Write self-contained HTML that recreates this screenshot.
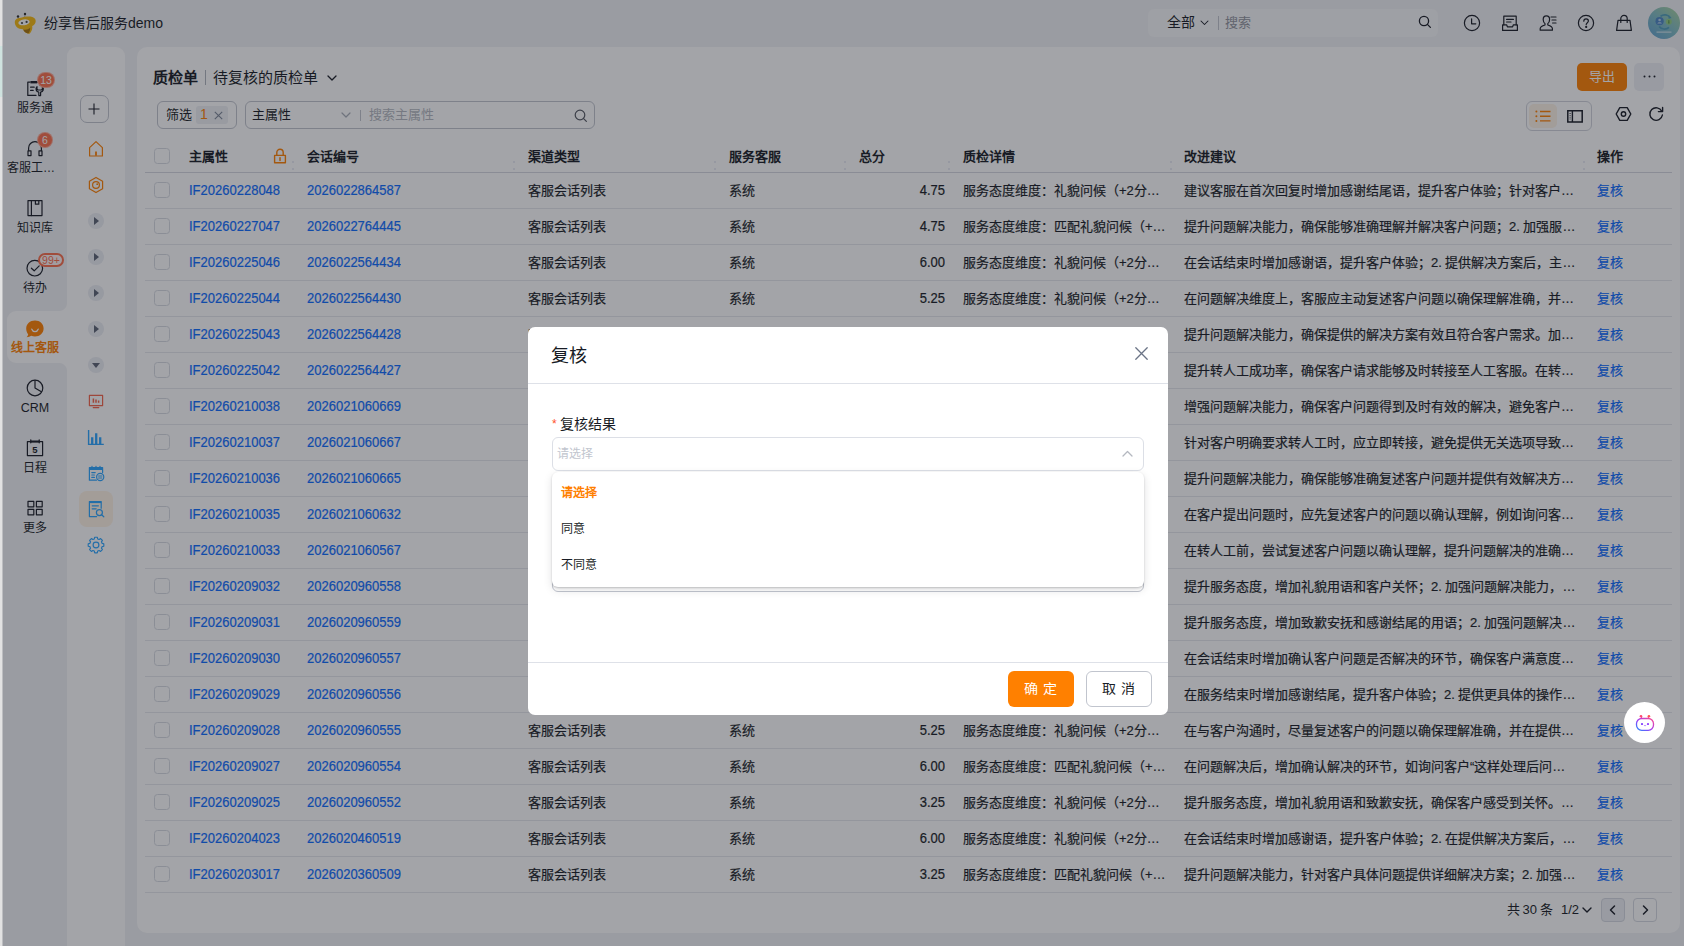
<!DOCTYPE html>
<html lang="zh-CN">
<head>
<meta charset="utf-8">
<title>质检单</title>
<style>
*{box-sizing:border-box;margin:0;padding:0}
html,body{width:1684px;height:946px;overflow:hidden}
body{position:relative;font-family:"Liberation Sans",sans-serif;font-size:13px;color:#181c25;background:#f1f2f5}
.abs{position:absolute}
svg{display:block;overflow:visible}
#app{position:absolute;left:0;top:0;width:1684px;height:946px;background:#f1f2f5}
#strip{position:absolute;left:0;top:0;width:3px;height:946px;background:linear-gradient(90deg,#e2e2e2 0,#e2e2e2 2px,#bdbec1 2px,#bdbec1 3px);z-index:50}
#strip i{position:absolute;left:0;top:46px;width:3px;height:51px;background:linear-gradient(90deg,#cfe3df 0,#cfe3df 2px,#b4bcbe 2px,#b4bcbe 3px)}
/* header */
#logo{left:10px;top:8px;width:30px;height:28px}
#brand{left:44px;top:14px;font-size:14px;line-height:18px;white-space:nowrap;color:#181c25}
#hsearch{left:1148px;top:9px;width:290px;height:28px;border-radius:6px;background:#f7f8fa}
#hsearch .all{position:absolute;left:19px;top:4px;font-size:14px;line-height:18px}
#hsearch .chev{position:absolute;left:52px;top:11px;width:9px;height:6px}
#hsearch .sep{position:absolute;left:70px;top:7px;width:1px;height:14px;background:#c1c5ce}
#hsearch .ph{position:absolute;left:77px;top:5px;font-size:13px;line-height:17px;color:#91959e}
#hsearch .mag{position:absolute;left:270px;top:6px;width:14px;height:14px}
.hicon{position:absolute;top:14px;width:18px;height:18px;fill:none;stroke:#181c25;stroke-width:1.2;stroke-linecap:round;stroke-linejoin:round}
#avatar{left:1648px;top:7px;width:32px;height:32px;border-radius:50%;background:linear-gradient(40deg,#5f9fd0 0%,#7fbcc4 50%,#acd59c 100%);overflow:hidden}
/* sidebar */
#side2{left:67px;top:47px;width:58px;height:899px;background:#fff;border-radius:9px 9px 0 0}
#activetab{left:7px;top:311px;width:62px;height:52px;background:#fff;border-radius:9px 0 0 9px}
.nav{position:absolute;left:3px;width:64px;text-align:center;font-size:12px;line-height:16px;color:#181c25;white-space:nowrap}
.nicon{position:absolute;width:20px;height:20px;fill:none;stroke:#181c25;stroke-width:1.2;stroke-linecap:round;stroke-linejoin:round}
.badge{position:absolute;background:#fa6e4c;box-shadow:0 0 0 1px rgba(255,255,255,.55);color:#fff;font-size:10px;line-height:14px;height:14px;min-width:14px;border-radius:7px;text-align:center;padding:0 3px}
.s2i{position:absolute;left:86px;width:20px;height:20px;fill:none;stroke-width:1.2;stroke-linecap:round;stroke-linejoin:round}
.play{position:absolute;left:88px;width:16px;height:16px;border-radius:50%;background:#eceef3}
.play i{position:absolute;left:6px;top:4px;width:0;height:0;border-left:5px solid #5d6476;border-top:4px solid transparent;border-bottom:4px solid transparent}
.play.down i{left:4px;top:6px;border-left:4px solid transparent;border-right:4px solid transparent;border-top:5px solid #5d6476;border-bottom:0}
/* main */
#main{left:137px;top:47px;width:1543px;height:886px;background:#fff;border-radius:10px}
#overlay{position:absolute;left:3px;top:0;width:1681px;height:946px;background:rgba(24,28,37,.4);z-index:40}
/* main content */
#title{left:153px;top:69px;font-size:15px;line-height:18px;font-weight:bold;white-space:nowrap}
#title2{left:213px;top:69px;font-size:15px;line-height:18px;white-space:nowrap}
.chip{left:157px;top:101px;width:80px;height:28px;border:1px solid #c1c5ce;border-radius:6px}
.chip span{position:absolute;left:8px;top:5px;line-height:16px}
.chip .tag{position:absolute;left:38px;top:4px;width:32px;height:18px;border-radius:3px;background:#eef0f4}
.chip .tag b{position:absolute;left:4px;top:0;font-weight:normal;font-size:14px;color:#ff8000;line-height:17px}
#tsearch{left:245px;top:101px;width:350px;height:28px;border:1px solid #c1c5ce;border-radius:6px}
#tsearch .f{position:absolute;left:6px;top:5px;line-height:16px}
#tsearch .sep{position:absolute;left:114px;top:8px;width:1px;height:11px;background:#c1c5ce}
#tsearch .ph{position:absolute;left:123px;top:5px;line-height:16px;color:#b4b8c0}
#export{left:1577px;top:63px;width:50px;height:28px;border-radius:5px;background:#ff8000;color:#fff;text-align:center;line-height:27px;font-size:13px}
#more{left:1634px;top:63px;width:30px;height:28px;border-radius:5px;background:#eff1f6}
#viewgrp{left:1526px;top:101px;width:66px;height:30px;border:1px solid #d0d3db;border-radius:6px}
#viewgrp .on{position:absolute;left:2px;top:2px;width:28px;height:24px;border-radius:5px;background:#fdf3e6}
.th{position:absolute;top:149px;font-weight:bold;line-height:16px;white-space:nowrap}
.cb{position:absolute;left:154px;width:16px;height:16px;border:1px solid #d8dbe2;border-radius:3.500px;background:#fff}
.hl{position:absolute;left:145px;width:1527px;height:1px;background:#e6e8ed}
.r{position:absolute;left:0;width:1684px;height:36px}
.r span{position:absolute;top:11px;line-height:16px;white-space:nowrap;overflow:hidden;-webkit-text-stroke:.2px currentColor}
.r .a{left:189px;color:#0c6cff;transform:scaleY(1.1);transform-origin:0 74%}
.r .b{left:307px;color:#0c6cff;transform:scaleY(1.1);transform-origin:0 74%}
.r .c{left:528px}
.r .d{left:729px}
.r .e{left:880px;width:65px;text-align:right;transform:scaleY(1.1);transform-origin:0 74%}
.r .f{left:963px;width:206px}
.r .g{left:1184px;width:400px}
.r .h{left:1597px;color:#0c6cff}
#pager{left:1507px;top:902px;line-height:16px;white-space:nowrap;font-size:13px;word-spacing:-1px}
.pbtn{position:absolute;top:898px;width:24px;height:24px;border:1px solid #d6d9e1;border-radius:4px}
#bot{position:absolute;left:1624px;top:702px;width:41px;height:41px;border-radius:50%;background:#fff;z-index:45}
.dot{position:absolute;width:2px;height:2px;background:#e3e6f0;border-radius:1px}
/* modal */
#modal{position:absolute;left:528px;top:327px;width:640px;height:388px;background:#fff;border-radius:7px;z-index:60}
#modal .ttl{position:absolute;left:23px;top:17px;font-size:18px;line-height:24px;color:#181c25;white-space:nowrap}
#modal .hsep{position:absolute;left:0;top:56px;width:640px;height:1px;background:#dee1e8}
#modal .fsep{position:absolute;left:0;top:335px;width:640px;height:1px;background:#dee1e8}
#modal .lbl{position:absolute;left:24px;top:88px;font-size:14px;line-height:18px;white-space:nowrap;color:#181c25}
#modal .lbl b{font-weight:normal;color:#ff522a;font-size:12px;margin-right:3px;position:relative;top:-1px}
#modal .sel{position:absolute;left:24px;top:110px;width:592px;height:34px;border:1px solid #dcdfe6;border-radius:6px;background:#fff}
#modal .sel span{position:absolute;left:4px;top:8px;font-size:12px;line-height:16px;color:#c1c5ce}
#modal .ta{position:absolute;left:24px;top:200px;width:592px;height:65px;border:1px solid #c1c5ce;border-radius:6px;background:#fff}
#modal .dd{position:absolute;left:24px;top:145px;width:592px;height:115px;border-radius:6px;background:#fff;box-shadow:0 1px 2px rgba(24,28,37,.22),0 3px 10px rgba(24,28,37,.12)}
#modal .dd div{position:absolute;left:9px;font-size:12px;line-height:16px;white-space:nowrap;color:#181c25}
#modal .btn{position:absolute;top:344px;width:66px;height:36px;border-radius:6px;font-size:13px;line-height:34px;text-align:center;white-space:nowrap}
#modal .btn span{display:inline-block;width:13px;text-align:center;transform:scaleX(1.08)}
#modal .btn span+span{margin-left:5.5px}
#modal .ok{left:480px;background:#ff8000;color:#fff;line-height:36px}
#modal .no{left:558px;border:1px solid #c1c5ce;color:#181c25;background:#fff}
</style>
</head>
<body>
<div id="app">
  <div id="side2" class="abs"></div>
  <div id="activetab" class="abs"></div>
  <div id="main" class="abs"></div>
  <!-- header -->
  <svg id="logo" class="abs" viewBox="10 8 30 28">
    <circle cx="18" cy="16.500" r="1.200" fill="#2e2e2e"/><circle cx="25" cy="14" r="1.200" fill="#2e2e2e"/>
    <path d="M18.300 17.200l.9 1.600M25 15l-.3 2" stroke="#6b6b6b" stroke-width=".5" fill="none"/>
    <path d="M14.800 22.500C14.600 19 18 17.600 22 17.400c3.500-.9 10.500-2 13 1.400 1.600 2.600.3 6-2.800 7.200.6 2.800-.6 5.600-2.600 7.800-2.800-.2-5.600-1.800-6.600-4.600-4.200.2-8-2.400-8.200-6.700z" fill="#f5b90f"/>
    <path d="M23.200 29.400c2 .8 5.200.2 7-1.600.2 2.200-.6 4.200-1.800 5.600-2.400-.2-4.600-1.800-5.200-4z" fill="#a9750c"/>
    <ellipse cx="24" cy="22.300" rx="5.700" ry="2.900" transform="rotate(-9 24 22.300)" fill="#fff"/>
    <circle cx="22" cy="23" r="1.100" fill="#444"/><circle cx="26.600" cy="21.900" r="1.100" fill="#444"/>
  </svg>
  <div id="brand" class="abs">纷享售后服务demo</div>
  <div id="hsearch" class="abs">
    <span class="all">全部</span>
    <svg class="chev" viewBox="0 0 9 6"><path d="M1 1l3.500 3.500L8 1" fill="none" stroke="#181c25" stroke-width="1.050" stroke-linecap="round" stroke-linejoin="round"/></svg>
    <i class="sep"></i><span class="ph">搜索</span>
    <svg class="mag" viewBox="0 0 14 14"><circle cx="6" cy="6" r="4.600" fill="none" stroke="#181c25" stroke-width="1.300"/><path d="M9.400 9.400l3 3" stroke="#181c25" stroke-width="1.300" stroke-linecap="round"/></svg>
  </div>
  <svg class="hicon" style="left:1463px" viewBox="0 0 18 18"><circle cx="9" cy="9" r="7.600"/><path d="M8.600 4.800v5h4.200"/></svg>
  <svg class="hicon" style="left:1501px" viewBox="0 0 18 18"><path d="M2.800 10.800V2.200h12.400v8.600"/><path d="M1.600 10.800h4l.8 2h5.200l.8-2h4v5.600H1.600z"/><path d="M5.600 5.400h6.800M5.600 8h4.400"/></svg>
  <svg class="hicon" style="left:1539px" viewBox="0 0 18 18"><path d="M7.400 1.800c2 0 3.200 1.600 3.200 3.600 0 1.800-.8 3.400-1.800 4.200v1.400c2.600.8 4.600 2 4.600 3.600v1.600H1.200v-1.600c0-1.600 2-2.800 4.800-3.600V9.600C5 8.800 4.200 7.200 4.200 5.400c0-2 1.200-3.600 3.200-3.600z"/><path d="M12 3h5M13 6h4M13.600 9h3.400"/></svg>
  <svg class="hicon" style="left:1577px" viewBox="0 0 18 18"><circle cx="9" cy="9" r="7.600"/><path d="M6.800 7.200c0-1.400 1-2.300 2.300-2.300s2.300.9 2.300 2.100c0 1.700-2.200 1.700-2.200 3.600"/><circle cx="9.200" cy="12.900" r=".5" fill="#181c25"/></svg>
  <svg class="hicon" style="left:1615px" viewBox="0 0 18 18"><path d="M3 6.400h12l1.400 10H1.600z"/><path d="M5.800 8.400V4.600c0-1.800 1.400-3.200 3.200-3.200s3.200 1.400 3.200 3.200v3.800"/></svg>
  <div id="avatar" class="abs">
    <svg viewBox="0 0 32 32" width="32" height="32" opacity=".9"><path d="M12.500 9.400c3-2.600 8-1.800 9.800 1.600M21 20.400c-3 2.600-7.600 2-9.800-1" fill="none" stroke="#4a9ab8" stroke-width="1.700"/><path d="M21 8.400l2.600 2.600-3.200.8z" fill="#4a9ab8"/><circle cx="11.600" cy="14.200" r="4.100" fill="#4680c4"/><circle cx="11.600" cy="13" r="1.300" fill="#b9d4ee"/><path d="M9.300 16.600c.5-1.800 4.100-1.800 4.600 0" fill="#b9d4ee"/><circle cx="20.800" cy="14.800" r="3" fill="#93cf7c"/><path d="M20.400 13h.9l.4 3.400h-1.800z" fill="#5f9a48"/><rect x="8.500" y="24.400" width="15" height="1.500" fill="#d9eaf0" opacity=".75"/></svg>
  </div>
  <!-- sidebar col 1 -->
  <div class="abs" style="left:59px;top:303px;width:8px;height:8px;background:radial-gradient(circle at 0 0,rgba(255,255,255,0) 7.500px,#fff 8.500px)"></div>
  <div class="abs" style="left:59px;top:363px;width:8px;height:8px;background:radial-gradient(circle at 0 100%,rgba(255,255,255,0) 7.500px,#fff 8.500px)"></div>

  <svg class="nicon" style="left:25px;top:78px" viewBox="0 0 20 20"><path d="M11 17.400H2.800V4.200h2M12.600 4.200h2.200v3"/><path d="M5.400 3h6.800v2.400H5.400z" fill="#181c25" stroke="none"/><path d="M5.600 9.200h3.600M5.600 12.400h2.600"/><path d="M12 8.600a3.300 3.300 0 0 0 1.800 5.600v3.400h1.800v-3.400a3.300 3.300 0 0 0 1.800-5.600v2.600l-1 .8h-3.400l-1-.8z"/></svg>
  <div class="nav" style="top:100px">服务通</div>
  <div class="badge" style="left:37px;top:72px;width:18px;height:16px;line-height:14px;border-radius:8px;padding:0;font-size:10.5px;border:1px solid rgba(255,255,255,.4);box-shadow:none">13</div>

  <svg class="nicon" style="left:25px;top:138px" viewBox="0 0 20 20"><path d="M3.600 12.600V10a6.400 6.400 0 0 1 12.800 0v2.600"/><path d="M3 12.800h3v4.800H3zM14 12.800h3v4.800h-3z"/></svg>
  <div class="nav" style="top:160px;left:7px;width:auto;text-align:left">客服工…</div>
  <div class="badge" style="left:37px;top:132px;width:16px;height:16px;line-height:14px;border-radius:8px;padding:0;font-size:10.5px;border:1px solid rgba(255,255,255,.4);box-shadow:none">6</div>

  <svg class="nicon" style="left:25px;top:198px" viewBox="0 0 20 20"><path d="M3 2.600h14v15H3z"/><path d="M6.400 2.600v15"/><path d="M10.400 2.800v3.400h3.400V2.800"/></svg>
  <div class="nav" style="top:220px">知识库</div>

  <svg class="nicon" style="left:25px;top:258px" viewBox="0 0 20 20"><circle cx="9.800" cy="10.200" r="7.800"/><path d="M6.400 10.200l2.800 2.600 5-5"/></svg>
  <div class="nav" style="top:280px">待办</div>
  <div class="abs" style="left:38px;top:253px;width:26px;height:14px;border:2px solid #fa6e4c;border-radius:7px;background:#fdf3f2;color:#fa6e4c;font-size:10.500px;line-height:10px;text-align:center">99+</div>

  <svg class="abs" style="left:25px;top:320px;width:20px;height:18px" viewBox="0 0 20 18"><path d="M10 .6c5 0 8.600 3.400 8.600 7.800 0 4.600-3.800 8-8.600 8-1.400 0-2.600-.2-3.800-.6-1.200.8-2.800 1.400-4.600 1.400.8-.8 1.400-1.800 1.600-3C2 12.800 1.200 10.800 1.200 8.400 1.200 4 5 .6 10 .6z" fill="#ff8000"/><path d="M6.800 9.200c.6 1.600 1.800 2.400 3.200 2.400s2.600-.8 3.200-2.400" fill="none" stroke="#fff" stroke-width="1.300" stroke-linecap="round"/></svg>
  <div class="nav" style="top:340px;font-weight:bold;color:#ff8000">线上客服</div>

  <svg class="nicon" style="left:25px;top:378px" viewBox="0 0 20 20"><circle cx="10" cy="10" r="7.800"/><path d="M10 2.400V10l6.400 3.800"/></svg>
  <div class="nav" style="top:400px;font-size:12.500px">CRM</div>

  <svg class="nicon" style="left:25px;top:438px" viewBox="0 0 20 20"><path d="M2.400 3.600h15.200v14H2.400z"/><path d="M5.800 1.800v3M14.200 1.800v3" /><path d="M5.800 3.600h8.400" stroke-width="2"/><text x="10" y="14.600" font-size="9.500" font-weight="bold" text-anchor="middle" fill="#181c25" stroke="none" font-family="Liberation Sans, sans-serif">5</text></svg>
  <div class="nav" style="top:460px">日程</div>

  <svg class="nicon" style="left:25px;top:498px" viewBox="0 0 20 20"><path d="M3 3.400h5.800v5.400H3zM11.400 3.400h5.800v5.400h-5.800zM3 11.400h5.800v5.400H3zM11.400 11.400h5.800v5.400h-5.800z"/></svg>
  <div class="nav" style="top:520px">更多</div>
  <!-- sidebar col 2 -->
  <div class="abs" style="left:80px;top:95px;width:29px;height:28px;border:1px solid #c1c5ce;border-radius:7px"></div>
  <svg class="abs" style="left:88px;top:103px;width:12px;height:12px" viewBox="0 0 12 12"><path d="M6 .5v11M.5 6h11" stroke="#181c25" stroke-width="1.100" fill="none"/></svg>

  <svg class="s2i" style="top:139px;stroke:#ff8000" viewBox="0 0 20 20"><path d="M3.600 8.600L10 2.600l6.400 6v8.400H3.600z"/><path d="M10 12.600v4.200" stroke-width="1.800" stroke-linecap="butt"/></svg>
  <svg class="s2i" style="top:175px;stroke:#ff8000" viewBox="0 0 20 20"><path d="M10 2.400l6.600 3.800v7.600L10 17.600l-6.600-3.800V6.200z"/><circle cx="10" cy="10" r="3.400"/><circle cx="11.200" cy="9.200" r=".9" fill="#ff8000" stroke="none"/></svg>

  <div class="play" style="top:213px"><i></i></div>
  <div class="play" style="top:249px"><i></i></div>
  <div class="play" style="top:285px"><i></i></div>
  <div class="play" style="top:321px"><i></i></div>
  <div class="play down" style="top:357px"><i></i></div>

  <svg class="s2i" style="top:391px;stroke:#f5654a" viewBox="0 0 20 20"><path d="M3.400 4.400h13.200v10.200H3.400z"/><path d="M7.200 16.600h5.600"/><path d="M7.400 7.400v4.400M10 8.400v3.400M12.600 9.400v2.400" stroke-width="1.500" stroke-linecap="butt"/></svg>
  <svg class="s2i" style="top:427px;stroke:#2ba5ff" viewBox="0 0 20 20"><path d="M2.600 3v14.400h15.200" stroke-linecap="butt" stroke-linejoin="miter" stroke-width="1.400"/><path d="M6.200 10.200v7M10.200 6.200v11M14.200 10.200v7" stroke-width="2.300" stroke-linecap="butt"/></svg>
  <svg class="s2i" style="top:463px;stroke:#2ba5ff" viewBox="0 0 20 20"><path d="M10.400 17.200H3.400V4.600h13.200v5"/><path d="M3.400 6h13.200" stroke-width="2" stroke-linecap="butt"/><path d="M6 3.400v1.600M10 3.400v1.600M14 3.400v1.600"/><path d="M5.800 9.600h3.400M5.800 12h2.600M5.800 14.400h2.600"/><circle cx="14.200" cy="14" r="3.600"/><path d="M12.600 13h3.200M12.600 15h3.200"/></svg>

  <div class="abs" style="left:79px;top:491px;width:34px;height:36px;border-radius:8px;background:#fff3e4"></div>
  <svg class="s2i" style="top:499px;stroke:#2ba5ff" viewBox="0 0 20 20"><path d="M10.600 17.600H3.400V2.600h11.800v6.600"/><path d="M3.400 3.200h11.800" stroke-width="1.800" stroke-linecap="butt"/><path d="M6.200 6.800h6.200M6.200 9.800h4"/><circle cx="13.400" cy="13.600" r="3"/><path d="M15.600 15.800l2.200 2"/></svg>
  <svg class="s2i" style="top:535px;stroke:#2ba5ff;stroke-width:1.15" viewBox="0 0 20 20"><circle cx="10" cy="10" r="2.900"/><path d="M8.32 3.93 L8.74 2.20 L11.26 2.20 L11.68 3.93 L13.11 4.52 L14.62 3.60 L16.40 5.38 L15.48 6.89 L16.07 8.32 L17.80 8.74 L17.80 11.26 L16.07 11.68 L15.48 13.11 L16.40 14.62 L14.62 16.40 L13.11 15.48 L11.68 16.07 L11.26 17.80 L8.74 17.80 L8.32 16.07 L6.89 15.48 L5.38 16.40 L3.60 14.62 L4.52 13.11 L3.93 11.68 L2.20 11.26 L2.20 8.74 L3.93 8.32 L4.52 6.89 L3.60 5.38 L5.38 3.60 L6.89 4.52z"/></svg>
  <!-- main toolbar -->
  <div id="title" class="abs">质检单</div>
  <i class="abs" style="left:205px;top:70px;width:1px;height:15px;background:#b0b4bd"></i>
  <div id="title2" class="abs">待复核的质检单</div>
  <svg class="abs" style="left:327px;top:75px;width:10px;height:7px" viewBox="0 0 10 7"><path d="M1 1l4 4 4-4" fill="none" stroke="#181c25" stroke-width="1.300" stroke-linecap="round" stroke-linejoin="round"/></svg>

  <div class="chip abs"><span>筛选</span><div class="tag"><b>1</b>
    <svg style="position:absolute;left:18px;top:5px;width:9px;height:9px" viewBox="0 0 9 9"><path d="M.8 .8l7.400 7.400M8.200 .8L.8 8.200" stroke="#7b8494" stroke-width="1.100" fill="none"/></svg></div></div>
  <div id="tsearch" class="abs"><span class="f">主属性</span>
    <svg style="position:absolute;left:95px;top:10px;width:10px;height:7px" viewBox="0 0 10 7"><path d="M1 1l4 4 4-4" fill="none" stroke="#a9aeb8" stroke-width="1.200" stroke-linecap="round" stroke-linejoin="round"/></svg>
    <i class="sep"></i><span class="ph">搜索主属性</span>
    <svg style="position:absolute;left:328px;top:7px;width:14px;height:14px" viewBox="0 0 14 14"><circle cx="6" cy="6" r="4.800" fill="none" stroke="#545861" stroke-width="1.200"/><path d="M9.600 9.600l2.800 2.800" stroke="#545861" stroke-width="1.200" stroke-linecap="round"/></svg>
  </div>

  <div id="export" class="abs">导出</div>
  <div id="more" class="abs"><svg style="position:absolute;left:9px;top:12px;width:13px;height:3px" viewBox="0 0 13 3"><circle cx="1.500" cy="1.500" r="1" fill="#181c25"/><circle cx="6.500" cy="1.500" r="1" fill="#181c25"/><circle cx="11.500" cy="1.500" r="1" fill="#181c25"/></svg></div>
  <div id="viewgrp" class="abs"><div class="on"></div>
    <svg style="position:absolute;left:8px;top:8px;width:16px;height:13px" viewBox="0 0 16 13"><path d="M5 1.500h10.500M5 6.200h10.500M5 10.900h10.500" stroke="#ff8000" stroke-width="1.400" fill="none"/><circle cx="1.400" cy="1.500" r="1" fill="#ff8000"/><circle cx="1.400" cy="6.200" r="1" fill="#ff8000"/><circle cx="1.400" cy="10.900" r="1" fill="#ff8000"/></svg>
    <svg style="position:absolute;left:40px;top:8px;width:16px;height:13px" viewBox="0 0 16 13"><path d="M.8 .8h14.400v11.200H.8z" fill="none" stroke="#181c25" stroke-width="1.500"/><path d="M5.400 .8v11.200" stroke="#181c25" stroke-width="1.400"/><path d="M3.100 3v7" stroke="#181c25" stroke-width="1" stroke-dasharray="1 1.200"/></svg>
  </div>
  <svg class="abs" style="left:1615px;top:106px;width:17px;height:16px" viewBox="0 0 17 16"><path d="M1.200 8l3.600-6.400h7.400L15.800 8l-3.600 6.400H4.800z" fill="none" stroke="#181c25" stroke-width="1.400" stroke-linejoin="round"/><circle cx="8.500" cy="8" r="2.200" fill="none" stroke="#181c25" stroke-width="1.400"/></svg>
  <svg class="abs" style="left:1648px;top:106px;width:16px;height:16px" viewBox="0 0 16 16"><path d="M13.800 5.200A6.300 6.300 0 1 0 14.400 9" fill="none" stroke="#181c25" stroke-width="1.400" stroke-linecap="round"/><path d="M14.600 1.400v4.200h-4.200" fill="none" stroke="#181c25" stroke-width="1.400" stroke-linecap="round" stroke-linejoin="round"/></svg>

  <!-- table header -->
  <i class="cb" style="top:148px"></i>
  <div class="th" style="left:189px">主属性</div>
  <svg class="abs" style="left:273px;top:148px;width:14px;height:16px" viewBox="0 0 14 16"><path d="M1.600 7.400h10.800v7.400H1.600z" fill="none" stroke="#ff8000" stroke-width="1.400" stroke-linejoin="round"/><path d="M3.800 7.200V4.400a3.200 3.200 0 0 1 6.400 0v2.800" fill="none" stroke="#ff8000" stroke-width="1.400"/><path d="M7 9.800v2.600" stroke="#ff8000" stroke-width="1.500" stroke-linecap="round"/></svg>
  <div class="th" style="left:307px">会话编号</div>
  <div class="th" style="left:528px">渠道类型</div>
  <div class="th" style="left:729px">服务客服</div>
  <div class="th" style="left:859px">总分</div>
  <div class="th" style="left:963px">质检详情</div>
  <div class="th" style="left:1184px">改进建议</div>
  <div class="th" style="left:1597px">操作</div>
  <i class="dot" style="left:292px;top:161px"></i><i class="dot" style="left:292px;top:168px"></i><i class="dot" style="left:513px;top:161px"></i><i class="dot" style="left:513px;top:168px"></i><i class="dot" style="left:714px;top:161px"></i><i class="dot" style="left:714px;top:168px"></i><i class="dot" style="left:844px;top:161px"></i><i class="dot" style="left:844px;top:168px"></i><i class="dot" style="left:948px;top:161px"></i><i class="dot" style="left:948px;top:168px"></i><i class="dot" style="left:1170px;top:161px"></i><i class="dot" style="left:1170px;top:168px"></i><i class="dot" style="left:1583px;top:161px"></i><i class="dot" style="left:1583px;top:168px"></i>
  <i class="hl" style="top:172px;background:#d5d8e0"></i>
  <!-- table rows -->
  <div class="r" style="top:172px"><i class="cb" style="top:10px"></i><span class="a">IF20260228048</span><span class="b">2026022864587</span><span class="c">客服会话列表</span><span class="d">系统</span><span class="e">4.75</span><span class="f">服务态度维度：礼貌问候（+2分…</span><span class="g">建议客服在首次回复时增加感谢结尾语，提升客户体验；针对客户…</span><span class="h">复核</span></div>
  <i class="hl" style="top:208px"></i>
  <div class="r" style="top:208px"><i class="cb" style="top:10px"></i><span class="a">IF20260227047</span><span class="b">2026022764445</span><span class="c">客服会话列表</span><span class="d">系统</span><span class="e">4.75</span><span class="f">服务态度维度：匹配礼貌问候（+…</span><span class="g">提升问题解决能力，确保能够准确理解并解决客户问题；2. 加强服…</span><span class="h">复核</span></div>
  <i class="hl" style="top:244px"></i>
  <div class="r" style="top:244px"><i class="cb" style="top:10px"></i><span class="a">IF20260225046</span><span class="b">2026022564434</span><span class="c">客服会话列表</span><span class="d">系统</span><span class="e">6.00</span><span class="f">服务态度维度：礼貌问候（+2分…</span><span class="g">在会话结束时增加感谢语，提升客户体验；2. 提供解决方案后，主…</span><span class="h">复核</span></div>
  <i class="hl" style="top:280px"></i>
  <div class="r" style="top:280px"><i class="cb" style="top:10px"></i><span class="a">IF20260225044</span><span class="b">2026022564430</span><span class="c">客服会话列表</span><span class="d">系统</span><span class="e">5.25</span><span class="f">服务态度维度：礼貌问候（+2分…</span><span class="g">在问题解决维度上，客服应主动复述客户问题以确保理解准确，并…</span><span class="h">复核</span></div>
  <i class="hl" style="top:316px"></i>
  <div class="r" style="top:316px"><i class="cb" style="top:10px"></i><span class="a">IF20260225043</span><span class="b">2026022564428</span><span class="c">客服会话列表</span><span class="d">系统</span><span class="e">4.50</span><span class="f">服务态度维度：礼貌问候（+2分…</span><span class="g">提升问题解决能力，确保提供的解决方案有效且符合客户需求。加…</span><span class="h">复核</span></div>
  <i class="hl" style="top:352px"></i>
  <div class="r" style="top:352px"><i class="cb" style="top:10px"></i><span class="a">IF20260225042</span><span class="b">2026022564427</span><span class="c">客服会话列表</span><span class="d">系统</span><span class="e">3.75</span><span class="f">服务态度维度：礼貌问候（+2分…</span><span class="g">提升转人工成功率，确保客户请求能够及时转接至人工客服。在转…</span><span class="h">复核</span></div>
  <i class="hl" style="top:388px"></i>
  <div class="r" style="top:388px"><i class="cb" style="top:10px"></i><span class="a">IF20260210038</span><span class="b">2026021060669</span><span class="c">客服会话列表</span><span class="d">系统</span><span class="e">4.25</span><span class="f">服务态度维度：礼貌问候（+2分…</span><span class="g">增强问题解决能力，确保客户问题得到及时有效的解决，避免客户…</span><span class="h">复核</span></div>
  <i class="hl" style="top:424px"></i>
  <div class="r" style="top:424px"><i class="cb" style="top:10px"></i><span class="a">IF20260210037</span><span class="b">2026021060667</span><span class="c">客服会话列表</span><span class="d">系统</span><span class="e">3.50</span><span class="f">服务态度维度：匹配礼貌问候（+…</span><span class="g">针对客户明确要求转人工时，应立即转接，避免提供无关选项导致…</span><span class="h">复核</span></div>
  <i class="hl" style="top:460px"></i>
  <div class="r" style="top:460px"><i class="cb" style="top:10px"></i><span class="a">IF20260210036</span><span class="b">2026021060665</span><span class="c">客服会话列表</span><span class="d">系统</span><span class="e">4.75</span><span class="f">服务态度维度：礼貌问候（+2分…</span><span class="g">提升问题解决能力，确保能够准确复述客户问题并提供有效解决方…</span><span class="h">复核</span></div>
  <i class="hl" style="top:496px"></i>
  <div class="r" style="top:496px"><i class="cb" style="top:10px"></i><span class="a">IF20260210035</span><span class="b">2026021060632</span><span class="c">客服会话列表</span><span class="d">系统</span><span class="e">5.00</span><span class="f">服务态度维度：礼貌问候（+2分…</span><span class="g">在客户提出问题时，应先复述客户的问题以确认理解，例如询问客…</span><span class="h">复核</span></div>
  <i class="hl" style="top:532px"></i>
  <div class="r" style="top:532px"><i class="cb" style="top:10px"></i><span class="a">IF20260210033</span><span class="b">2026021060567</span><span class="c">客服会话列表</span><span class="d">系统</span><span class="e">4.25</span><span class="f">服务态度维度：礼貌问候（+2分…</span><span class="g">在转人工前，尝试复述客户问题以确认理解，提升问题解决的准确…</span><span class="h">复核</span></div>
  <i class="hl" style="top:568px"></i>
  <div class="r" style="top:568px"><i class="cb" style="top:10px"></i><span class="a">IF20260209032</span><span class="b">2026020960558</span><span class="c">客服会话列表</span><span class="d">系统</span><span class="e">3.25</span><span class="f">服务态度维度：匹配礼貌问候（+…</span><span class="g">提升服务态度，增加礼貌用语和客户关怀；2. 加强问题解决能力，…</span><span class="h">复核</span></div>
  <i class="hl" style="top:604px"></i>
  <div class="r" style="top:604px"><i class="cb" style="top:10px"></i><span class="a">IF20260209031</span><span class="b">2026020960559</span><span class="c">客服会话列表</span><span class="d">系统</span><span class="e">3.50</span><span class="f">服务态度维度：礼貌问候（+2分…</span><span class="g">提升服务态度，增加致歉安抚和感谢结尾的用语；2. 加强问题解决…</span><span class="h">复核</span></div>
  <i class="hl" style="top:640px"></i>
  <div class="r" style="top:640px"><i class="cb" style="top:10px"></i><span class="a">IF20260209030</span><span class="b">2026020960557</span><span class="c">客服会话列表</span><span class="d">系统</span><span class="e">5.25</span><span class="f">服务态度维度：礼貌问候（+2分…</span><span class="g">在会话结束时增加确认客户问题是否解决的环节，确保客户满意度…</span><span class="h">复核</span></div>
  <i class="hl" style="top:676px"></i>
  <div class="r" style="top:676px"><i class="cb" style="top:10px"></i><span class="a">IF20260209029</span><span class="b">2026020960556</span><span class="c">客服会话列表</span><span class="d">系统</span><span class="e">5.75</span><span class="f">服务态度维度：礼貌问候（+2分…</span><span class="g">在服务结束时增加感谢结尾，提升客户体验；2. 提供更具体的操作…</span><span class="h">复核</span></div>
  <i class="hl" style="top:712px"></i>
  <div class="r" style="top:712px"><i class="cb" style="top:10px"></i><span class="a">IF20260209028</span><span class="b">2026020960555</span><span class="c">客服会话列表</span><span class="d">系统</span><span class="e">5.25</span><span class="f">服务态度维度：礼貌问候（+2分…</span><span class="g">在与客户沟通时，尽量复述客户的问题以确保理解准确，并在提供…</span><span class="h">复核</span></div>
  <i class="hl" style="top:748px"></i>
  <div class="r" style="top:748px"><i class="cb" style="top:10px"></i><span class="a">IF20260209027</span><span class="b">2026020960554</span><span class="c">客服会话列表</span><span class="d">系统</span><span class="e">6.00</span><span class="f">服务态度维度：匹配礼貌问候（+…</span><span class="g">在问题解决后，增加确认解决的环节，如询问客户“这样处理后问…</span><span class="h">复核</span></div>
  <i class="hl" style="top:784px"></i>
  <div class="r" style="top:784px"><i class="cb" style="top:10px"></i><span class="a">IF20260209025</span><span class="b">2026020960552</span><span class="c">客服会话列表</span><span class="d">系统</span><span class="e">3.25</span><span class="f">服务态度维度：礼貌问候（+2分…</span><span class="g">提升服务态度，增加礼貌用语和致歉安抚，确保客户感受到关怀。…</span><span class="h">复核</span></div>
  <i class="hl" style="top:820px"></i>
  <div class="r" style="top:820px"><i class="cb" style="top:10px"></i><span class="a">IF20260204023</span><span class="b">2026020460519</span><span class="c">客服会话列表</span><span class="d">系统</span><span class="e">6.00</span><span class="f">服务态度维度：礼貌问候（+2分…</span><span class="g">在会话结束时增加感谢语，提升客户体验；2. 在提供解决方案后，…</span><span class="h">复核</span></div>
  <i class="hl" style="top:856px"></i>
  <div class="r" style="top:856px"><i class="cb" style="top:10px"></i><span class="a">IF20260203017</span><span class="b">2026020360509</span><span class="c">客服会话列表</span><span class="d">系统</span><span class="e">3.25</span><span class="f">服务态度维度：匹配礼貌问候（+…</span><span class="g">提升问题解决能力，针对客户具体问题提供详细解决方案；2. 加强…</span><span class="h">复核</span></div>
  <i class="hl" style="top:892px"></i>
  <!-- pagination -->
  <div id="pager" class="abs">共 30 条</div>
  <div class="abs" style="left:1561px;top:902px;line-height:16px;font-size:13px">1/2</div>
  <svg class="abs" style="left:1582px;top:907px;width:10px;height:7px" viewBox="0 0 10 7"><path d="M1 1l4 4 4-4" fill="none" stroke="#181c25" stroke-width="1.400" stroke-linecap="round" stroke-linejoin="round"/></svg>
  <div class="pbtn" style="left:1601px;background:#eff1f6"><svg style="position:absolute;left:7px;top:6px;width:7px;height:10px" viewBox="0 0 7 10"><path d="M5.500 1L1.500 5l4 4" fill="none" stroke="#181c25" stroke-width="1.500" stroke-linecap="round" stroke-linejoin="round"/></svg></div>
  <div class="pbtn" style="left:1633px"><svg style="position:absolute;left:8px;top:6px;width:7px;height:10px" viewBox="0 0 7 10"><path d="M1.500 1l4 4-4 4" fill="none" stroke="#181c25" stroke-width="1.500" stroke-linecap="round" stroke-linejoin="round"/></svg></div>
</div>
<div id="strip"><i></i></div>
<div id="overlay"></div>
<div id="bot"><svg style="position:absolute;left:0;top:0;width:41px;height:41px" viewBox="0 0 41 41"><defs><linearGradient id="bg1" x1="0" y1="1" x2="1" y2="0"><stop offset="0" stop-color="#1e8bff"/><stop offset=".45" stop-color="#a03cf5"/><stop offset="1" stop-color="#ff4a8c"/></linearGradient></defs><circle cx="17" cy="14.200" r="1.300" fill="#ff4a6e"/><circle cx="24.900" cy="14.200" r="1.300" fill="#ff5a4e"/><path d="M17.300 15l.6 1.400M24.600 15l-.6 1.400" stroke="#f04a9a" stroke-width="1" fill="none"/><rect x="12.500" y="16.500" width="17" height="11.800" rx="5.200" fill="none" stroke="url(#bg1)" stroke-width="1.300"/><rect x="17" y="21" width="2" height="2" rx=".5" fill="#8a4cff"/><rect x="23" y="21" width="2" height="2" rx=".5" fill="#9a4cff"/><path d="M20.200 23.400c.5.500 1.200.500 1.700 0" stroke="#a05cff" stroke-width=".8" fill="none" stroke-linecap="round"/></svg></div>
<div id="modal">
  <div class="ttl">复核</div>
  <svg style="position:absolute;left:607px;top:20px;width:13px;height:13px" viewBox="0 0 13 13"><path d="M.8 .8l11.400 11.400M12.200 .8L.8 12.200" stroke="#6b7486" stroke-width="1.300" fill="none" stroke-linecap="round"/></svg>
  <i class="hsep"></i>
  <div class="lbl"><b>*</b>复核结果</div>
  <div class="sel"><span>请选择</span>
    <svg style="position:absolute;left:569px;top:12px;width:11px;height:7px" viewBox="0 0 11 7"><path d="M1 6l4.500-4.500L10 6" fill="none" stroke="#b4b8c0" stroke-width="1.300" stroke-linecap="round" stroke-linejoin="round"/></svg>
  </div>
  <div class="ta"></div>
  <div class="dd">
    <div style="top:13px;color:#ff8000;font-weight:bold">请选择</div>
    <div style="top:49px">同意</div>
    <div style="top:85px">不同意</div>
  </div>
  <i class="fsep"></i>
  <div class="btn ok"><span>确</span><span>定</span></div>
  <div class="btn no"><span>取</span><span>消</span></div>
</div>
</body>
</html>
